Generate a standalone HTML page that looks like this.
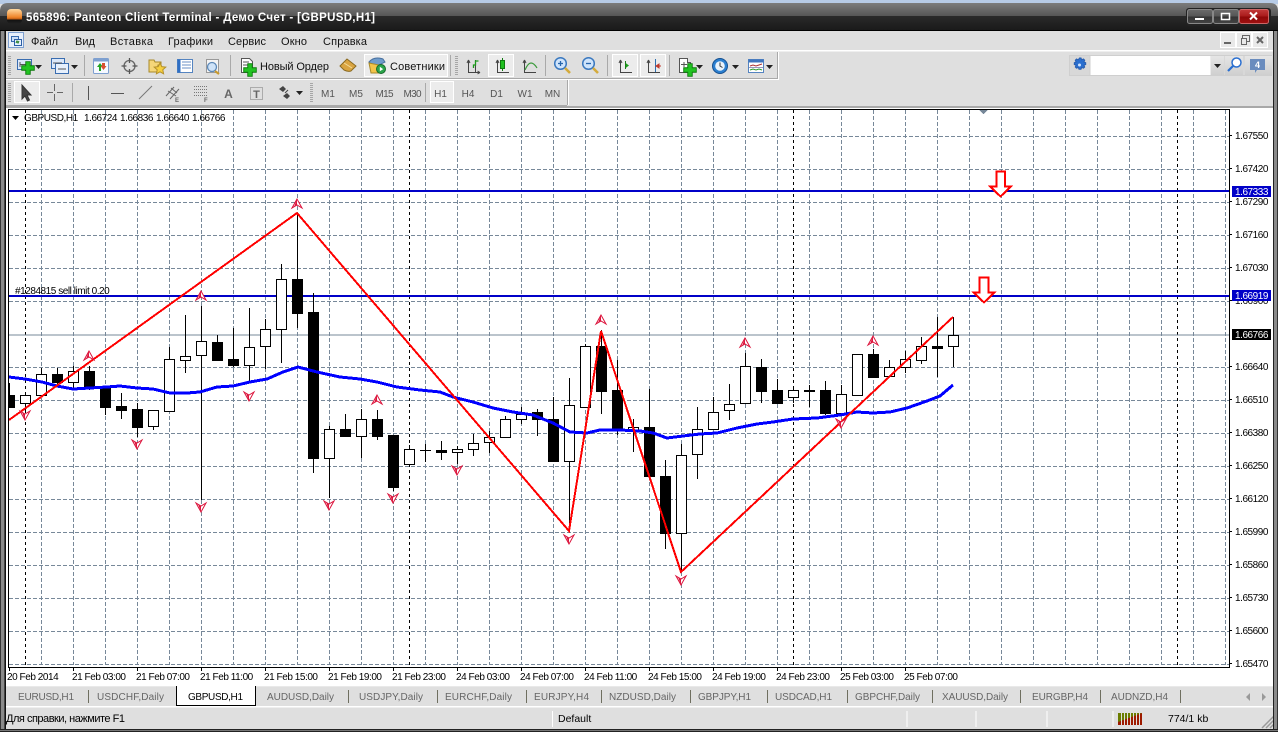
<!DOCTYPE html>
<html lang="ru"><head><meta charset="utf-8"><title>565896: Panteon Client Terminal</title>
<style>
html,body{margin:0;padding:0;width:1278px;height:732px;overflow:hidden;background:#dfdfdf}
svg{display:block;position:absolute;left:0;top:0}
text{font-family:"Liberation Sans","Noto Sans CJK SC",sans-serif}
.px text{font-size:10px;letter-spacing:-.45px;fill:#000}
.m text{font-size:11px;fill:#111}
.tf text{font-size:10px;fill:#555;text-anchor:middle}
.tb text{font-size:10px;fill:#666}
.c{shape-rendering:crispEdges}
</style></head><body>
<svg width="1278" height="732" viewBox="0 0 1278 732">
<defs>
<linearGradient id="tg" x1="0" y1="0" x2="0" y2="1"><stop offset="0" stop-color="#7c7c7c"/><stop offset="1" stop-color="#555"/></linearGradient>
<linearGradient id="tk" x1="0" y1="0" x2="0" y2="1"><stop offset="0" stop-color="#2a2a2a"/><stop offset="1" stop-color="#191919"/></linearGradient>
<linearGradient id="logo" x1="0" y1="0" x2="0" y2="1"><stop offset="0" stop-color="#ffd9a0"/><stop offset=".55" stop-color="#ee8428"/><stop offset=".68" stop-color="#b85a14"/><stop offset=".72" stop-color="#111"/><stop offset="1" stop-color="#222"/></linearGradient>
<linearGradient id="btn" x1="0" y1="0" x2="0" y2="1"><stop offset="0" stop-color="#6a6a6a"/><stop offset=".5" stop-color="#555"/><stop offset=".5" stop-color="#333"/><stop offset="1" stop-color="#444"/></linearGradient>
<linearGradient id="red" x1="0" y1="0" x2="0" y2="1"><stop offset="0" stop-color="#c23a3a"/><stop offset=".5" stop-color="#a81a1a"/><stop offset=".5" stop-color="#8e0808"/><stop offset="1" stop-color="#a01010"/></linearGradient>
<linearGradient id="sb" x1="0" y1="0" x2="0" y2="1"><stop offset="0" stop-color="#e6e6e6"/><stop offset="1" stop-color="#cfcfcf"/></linearGradient>
<g id="u"><path d="M0-5L-5 4 0 1 5 4z" fill="#fff" stroke="#dc143c"/><path d="M0-5L-3 3 0 1z" fill="#dc143c"/></g>
<g id="d"><path d="M0 5L-5-4 0-1 5-4z" fill="#fff" stroke="#dc143c"/><path d="M0 5L-3-3 0-1z" fill="#dc143c"/></g>
<path id="ar" d="M0 0h7l-3.500 4z" fill="#222"/>
<path id="plus" d="M-2.500-7h5v4.500h4.500v5h-4.500v4.500h-5v-4.500h-4.500v-5h4.500z" fill="#22c322" stroke="#0b7a0b"/>
<clipPath id="cc"><rect x="9" y="110" width="1220" height="557"/></clipPath>
</defs>

<!-- desktop + title bar -->
<rect width="1278" height="4" fill="#b7cbe6"/>
<path d="M0 16V11Q0 3 8 3H1270Q1278 3 1278 11V16z" fill="url(#tg)"/>
<rect y="16" width="1278" height="15" fill="url(#tk)"/>
<rect y="30" width="1278" height="1" fill="#000"/>
<rect x="7" y="9" width="15" height="15" rx="4" fill="url(#logo)"/>
<text x="26" y="21" font-size="11.5" font-weight="700" fill="#fff" textLength="349" lengthAdjust="spacing">565896: Panteon Client Terminal - Демо Счет - [GBPUSD,H1]</text>
<!-- window buttons -->
<rect x="1186" y="8" width="85" height="18" rx="3" fill="#222"/>
<rect x="1187.500" y="9.500" width="25" height="14" rx="2" fill="url(#btn)" stroke="#888"/>
<rect x="1213.500" y="9.500" width="25" height="14" rx="2" fill="url(#btn)" stroke="#888"/>
<rect x="1239.500" y="9.500" width="29" height="14" rx="2" fill="url(#red)" stroke="#c66"/>
<rect x="1195" y="18" width="9" height="2" fill="#fff"/>
<rect x="1221.500" y="13.500" width="8" height="6" fill="none" stroke="#fff" stroke-width="1.500"/>
<path d="M1250 12.500l7 7M1257 12.500l-7 7" stroke="#fff" stroke-width="2"/>

<!-- client -->
<rect y="31" width="1278" height="76" fill="#dfdfdf"/>
<rect y="50" width="1274" height="1.500" fill="#fff"/>
<rect y="106" width="1278" height="2" fill="#a8a8a8"/>
<!-- menu -->
<rect x="8.500" y="32.500" width="15" height="15" fill="#e8f0fb" stroke="#7ea0d0"/>
<rect x="11.500" y="36.500" width="7" height="5" fill="#cfe0f6" stroke="#3a6db0"/><rect x="14.500" y="39.500" width="7" height="6" fill="#e8f2ff" stroke="#2c5ea4"/><path d="M16 43l1-2 1 2 1-2" stroke="#1f7a1f" fill="none"/>
<g class="m">
<text x="31" y="45">Файл</text><text x="75" y="45">Вид</text><text x="110" y="45" textLength="43">Вставка</text><text x="168" y="45" textLength="45">Графики</text><text x="228" y="45" textLength="38">Сервис</text><text x="281" y="45" textLength="26">Окно</text><text x="323" y="45" textLength="44">Справка</text>
</g>
<g fill="#e9e9e9" stroke="#fff"><rect x="1220.500" y="32.500" width="15" height="15"/><rect x="1236.500" y="32.500" width="15" height="15"/><rect x="1252.500" y="32.500" width="15" height="15"/></g>
<rect x="1224" y="42" width="7" height="2" fill="#666"/>
<path d="M1242.500 38.500v-3h7v6h-3M1242.500 38.500h4v6h-5v-6z" fill="none" stroke="#666"/>
<path d="M1257 37l6 6M1263 37l-6 6" stroke="#666" stroke-width="2"/>

<!-- toolbar frames -->
<path d="M5 78.500H777.500V52" fill="none" stroke="#a9a9a9" class="c"/><path d="M5 79.500H778.500V52" fill="none" stroke="#fff" class="c"/>
<path d="M567.500 80V105" stroke="#a9a9a9" class="c"/><path d="M568.500 80V105" stroke="#fff" class="c"/>
<path d="M5 105.500H567" stroke="#a9a9a9" class="c"/>
<path d="M9.500 56v20M9.500 83v19M311.500 83v19M456.500 56v20" stroke="#a6a6a6" stroke-dasharray="1 1" stroke-width="3" class="c"/>
<path d="M84.500 55v21M230.500 55v21M545.500 55v21M607.500 55v21M669.500 55v21M450.500 55v21M72.500 83v19M425.500 83v19" stroke="#a9a9a9" class="c"/>

<!-- toolbar 1 icons -->
<rect x="17.500" y="59.500" width="14" height="10" fill="#dbe8fa" stroke="#3a6db0"/><path d="M20 64.500h8M20 62v5" stroke="#555" fill="none"/>
<use href="#plus" x="28" y="68" transform="translate(2.800 6.800) scale(.9)"/>
<use href="#ar" x="35" y="65"/>
<rect x="51.500" y="58.500" width="13" height="10" fill="#dbe8fa" stroke="#3a6db0"/><rect x="55.500" y="63.500" width="13" height="10" fill="#e7f0fc" stroke="#3a6db0"/><path d="M53 63h9M58 69h8" stroke="#555"/>
<use href="#ar" x="71" y="65"/>
<rect x="93.500" y="58.500" width="15" height="15" rx="1" fill="#f6f9ff" stroke="#7ea0d0"/><rect x="93.500" y="58.500" width="15" height="3" fill="#7ea0d0"/><path d="M99 71v-4h-2l3-4 3 4h-2v4z" fill="#22a322"/><path d="M102 63h3v3h1.500l-3 4-3-4h1.500z" fill="#d9502f"/>
<circle cx="129.500" cy="66" r="5.500" fill="none" stroke="#666" stroke-width="1.300"/><path d="M129.500 58v5M129.500 69v5M121.500 66h5M132.500 66h5" stroke="#555" stroke-width="1.300"/>
<path d="M149 60h5l1 2h6v3l-3 0-1 7h-8z" fill="#f5d679" stroke="#a88a2a"/><path d="M160 63l1.800 3.600 4 .5-3 2.700.8 4-3.600-2-3.600 2 .8-4-3-2.700 4-.5z" fill="#f6cf3f" stroke="#b3902a"/>
<rect x="177.500" y="59.500" width="15" height="13" fill="#fff" stroke="#5584c0"/><rect x="177.500" y="59.500" width="3" height="13" fill="#2f6fc4"/><path d="M182 62h9M182 65h9M182 68h9" stroke="#6a8fc4"/>
<rect x="206.500" y="59.500" width="12" height="13" fill="#f4f4f4" stroke="#999"/><circle cx="212" cy="67" r="4.500" fill="#cfe3f8" stroke="#5d89b8" stroke-width="1.300"/><path d="M215 71l4 3" stroke="#c99a2e" stroke-width="2.200"/>
<path d="M241.500 58.500h8l3 3v11h-11z" fill="#fff" stroke="#555"/><path d="M243 62h6M243 65h7" stroke="#555"/>
<use href="#plus" x="0" y="0" transform="translate(250 70) scale(.9)"/>
<text x="260" y="70" font-size="11" fill="#111" textLength="69">Новый Ордер</text>
<path d="M340 66l7-7 9 7-5 5q-3 1-7-1z" fill="#d9a441" stroke="#8a6a20"/><path d="M344 63l8 5" stroke="#f3dc9a"/>
<rect x="364.500" y="54.500" width="83" height="22" fill="#ececec" stroke="#fff"/>
<path d="M369 62q5-6 14-3l2 3-6 3-7 0z" fill="#6f9ccc" stroke="#48709e"/><path d="M369 63l10 2v8h-8z" fill="#f2c44a" stroke="#a88a2a"/>
<circle cx="381" cy="69" r="4.500" fill="#2aa44a" stroke="#176a2b"/><path d="M379.800 66.800v4.500l3.400-2.200z" fill="#fff"/>
<text x="390" y="70" font-size="11" fill="#111" textLength="55">Советники</text>

<!-- chart mode icons -->
<g fill="none" stroke="#444"><path d="M468.500 60v12.500H480M468.500 60l-1.500 3M468.500 60l1.500 3M480 72.500l-2.500-1.500M480 72.500l-2.500 1.500M475.500 60v12"/></g>
<path d="M473.500 68v-3h2v-4h3" fill="none" stroke="#1a9a1a" stroke-width="1.300"/>
<rect x="488.500" y="54.500" width="25" height="22" fill="#ececec" stroke="#fff"/>
<path d="M497.500 60v12.500H509M497.500 60l-1.500 3M497.500 60l1.500 3" fill="none" stroke="#444"/><rect x="500.500" y="60.500" width="4" height="8" fill="#1fc01f" stroke="#0e7a0e"/><path d="M502.500 58v2M502.500 69v2" stroke="#0e7a0e"/>
<path d="M524.500 60v12.500H536M524.500 60l-1.500 3M524.500 60l1.500 3" fill="none" stroke="#444"/><path d="M525 70q3-7 6-7t6 5" fill="none" stroke="#3a9a3a" stroke-width="1.200"/>
<!-- zoom -->
<circle cx="560.500" cy="63.500" r="5.800" fill="#cfe4fb" stroke="#3a78bf" stroke-width="1.500"/><path d="M558 63.500h5M560.500 61v5" stroke="#2766ad" stroke-width="1.300"/><path d="M565 68l5 5" stroke="#d4ab3c" stroke-width="2.600"/>
<circle cx="588.500" cy="63.500" r="5.800" fill="#cfe4fb" stroke="#3a78bf" stroke-width="1.500"/><path d="M586 63.500h5" stroke="#2766ad" stroke-width="1.300"/><path d="M593 68l5 5" stroke="#d4ab3c" stroke-width="2.600"/>
<!-- shift / autoscroll -->
<rect x="612.500" y="54.500" width="25" height="22" fill="#ececec" stroke="#fff"/><rect x="640.500" y="54.500" width="25" height="22" fill="#ececec" stroke="#fff"/>
<path d="M620.500 60v12.500H632M620.500 60l-1.500 3M620.500 60l1.500 3" fill="none" stroke="#444"/><path d="M625 62.500l4 3-4 3z" fill="#1aa01a"/><path d="M625.500 61v8" stroke="#1a7a1a"/>
<path d="M648.500 60v12.500H660M648.500 60l-1.500 3M648.500 60l1.500 3" fill="none" stroke="#444"/><path d="M655.500 59v13" stroke="#2c6fb0"/><path d="M661 66h-4M659 64l-3 2 3 2z" stroke="#c0392b" fill="#c0392b"/>
<!-- chart add, clock, template -->
<path d="M679.500 58.500h8v4h3v10h-11z" fill="#fff" stroke="#555"/><path d="M681 64.500h6M684 62v5" stroke="#555"/><use href="#plus" transform="translate(690 70) scale(.9)"/>
<use href="#ar" x="696" y="65"/>
<circle cx="720" cy="66" r="7.500" fill="#2b7fd0" stroke="#17508f"/><circle cx="720" cy="66" r="4.800" fill="#eaf3fb"/><path d="M720 62.500V66l2.500 1.500" stroke="#333" fill="none"/>
<use href="#ar" x="732" y="65"/>
<rect x="748.500" y="59.500" width="15" height="13" fill="#fff" stroke="#5584c0"/><rect x="748.500" y="59.500" width="15" height="3" fill="#3d75be"/><path d="M750 66l3-1 3 1 3-1 3-1" stroke="#a33" fill="none"/><path d="M750 70l3-1 3 1 3-1 3 1" stroke="#2a9a2a" fill="none"/><path d="M749 67.500h14" stroke="#99b"/>
<use href="#ar" x="766" y="65"/>
<!-- search -->
<rect x="1069.500" y="55.500" width="202" height="20" fill="#d8d8d8" stroke="#cfcfcf"/>
<path d="M1079 58l1.500 0 .7 1.800 1.800-.8 1.200 1.200-.8 1.800 1.800.7v1.800l-1.800.7.800 1.800-1.200 1.200-1.800-.8-.7 1.800h-2l-.7-1.800-1.800.8-1.200-1.200.8-1.800-1.800-.7v-1.800l1.800-.7-.8-1.800 1.200-1.200 1.800.8z" fill="#2a6fd0" stroke="#2a5fb0" transform="translate(.5 0)"/>
<circle cx="1079.500" cy="65" r="1.500" fill="#cfe3ff"/>
<rect x="1090" y="56" width="120.500" height="19" fill="#fff"/><path d="M1090 55.500v20" stroke="#cfcfcf"/>
<rect x="1211" y="56" width="13" height="19" fill="url(#sb)"/><use href="#ar" x="1214" y="64"/>
<rect x="1225" y="56" width="18" height="19" fill="url(#sb)"/><circle cx="1236.500" cy="62.500" r="4.500" fill="#fff" stroke="#2a6fd0" stroke-width="1.500"/><path d="M1233 66l-5 5" stroke="#2a6fd0" stroke-width="2.200"/>
<rect x="1245" y="56" width="27" height="19" fill="url(#sb)"/><path d="M1250 59h15v11h-8l-2 3v-3h-5z" fill="#6a8cbe"/><text x="1257.500" y="68" font-size="9" font-weight="700" fill="#fff" text-anchor="middle">4</text>

<!-- toolbar 2 -->
<rect x="14.500" y="81.500" width="25" height="21" fill="#ececec" stroke="#fff"/>
<path d="M22 85v14l3-3 2.500 5 2-1-2.500-5h4z" fill="#444" stroke="#333"/>
<path d="M54.500 84v7M54.500 94v7M47 92.500h6M57 92.500h6" stroke="#666"/>
<path d="M88.500 86v14" stroke="#555"/><path d="M111 93.500h13" stroke="#555"/><path d="M139 99l13-13" stroke="#777"/>
<path d="M166 96l8-9M170 99l9-10M168 91l8 5M171 88l6 5" stroke="#666" fill="none"/><text x="175" y="102" font-size="6" font-weight="700" fill="#666">E</text>
<path d="M194 86.500h13M194 89.500h13M194 92.500h13M194 95.500h13" stroke="#777" stroke-dasharray="1 1"/><text x="204" y="102" font-size="6" font-weight="700" fill="#666">F</text>
<text x="228.500" y="98" font-size="12" font-weight="700" fill="#666" text-anchor="middle">A</text>
<rect x="250.500" y="87.500" width="12" height="12" fill="none" stroke="#777" stroke-dasharray="1 1"/><text x="256.500" y="98" font-size="11" font-weight="700" fill="#666" text-anchor="middle">T</text>
<path d="M279 89l4-3 3 3-3 3zM283 96l4-3 3 3-3 3z" fill="#444"/><path d="M285 93l3-3" stroke="#444"/>
<use href="#ar" x="296" y="91"/>
<rect x="430.500" y="81.500" width="23" height="21" fill="#ececec" stroke="#fff"/>
<g class="tf"><text x="328" y="97">M1</text><text x="356" y="97">M5</text><text x="384.500" y="97" textLength="18">M15</text><text x="412.500" y="97" textLength="18">M30</text><text x="440.500" y="97">H1</text><text x="468" y="97">H4</text><text x="496.500" y="97">D1</text><text x="525" y="97">W1</text><text x="552.500" y="97">MN</text></g>

<!-- chart panel -->
<rect x="6" y="108" width="1267" height="579" fill="#fff"/>
<rect x="6" y="686" width="1267" height="1" fill="#e9e9e9"/>
<rect x="8.500" y="109.500" width="1221" height="558" fill="#fff" stroke="#000" class="c"/>

<g clip-path="url(#cc)" class="c">
<!-- grid -->
<path fill="none" stroke="#778899" stroke-dasharray="4 2" d="M41.500 110V665M73.500 110V665M105.500 110V665M137.500 110V665M169.500 110V665M201.500 110V665M233.500 110V665M265.500 110V665M297.500 110V665M329.500 110V665M361.500 110V665M393.500 110V665M425.500 110V665M457.500 110V665M489.500 110V665M521.500 110V665M553.500 110V665M585.500 110V665M617.500 110V665M649.500 110V665M681.500 110V665M713.500 110V665M745.500 110V665M777.500 110V665M809.500 110V665M841.500 110V665M873.500 110V665M905.500 110V665M937.500 110V665M969.500 110V665M1001.500 110V665M1033.500 110V665M1065.500 110V665M1097.500 110V665M1129.500 110V665M1161.500 110V665M1193.500 110V665M1225.500 110V665"/>
<path fill="none" stroke="#778899" stroke-dasharray="4 2" d="M9 136.500H1229M9 169.500H1229M9 202.500H1229M9 235.500H1229M9 268.500H1229M9 301.500H1229M9 367.500H1229M9 400.500H1229M9 433.500H1229M9 466.500H1229M9 499.500H1229M9 532.500H1229M9 565.500H1229M9 598.500H1229M9 631.500H1229M9 664.500H1229"/>
<path fill="none" stroke="#000" stroke-dasharray="3 3" d="M25.500 110V667M409.500 110V667M793.500 110V667M1177.500 110V667"/>
<path stroke="#778899" d="M9 335H1229"/>
<path d="M979 110h9l-4.500 4z" fill="#778899"/>
<!-- trade lines -->
<path d="M9 191H1229M9 296H1229" stroke="#0000c8" stroke-width="2"/>
<!-- wicks -->
<path stroke="#000" fill="none" d="M9.500 383V395M25.500 395V412M41.500 368V395M57.500 368V386M73.500 366V390M89.500 366V390M105.500 387V415M121.500 393V419M137.500 403V437M153.500 410V430M169.500 347V411M185.500 315V373M201.500 306V500M217.500 335V361M233.500 328V367M249.500 308V383M265.500 319V369M281.500 264V363M297.500 213V328M313.500 293V473M329.500 426V498M345.500 414V437M361.500 409V458M377.500 410V440M393.500 435V491M409.500 445V466M425.500 444V462M441.500 441V460M457.500 446V464M473.500 434V456M489.500 431V453M505.500 416V438M521.500 407V424M537.500 409V436M553.500 397V462M569.500 378V530M585.500 344V407M601.500 330V414M617.500 360V435M633.500 419V452M649.500 389V476M665.500 460V549M681.500 444V572M697.500 407V479M713.500 397V429M729.500 384V420M745.500 353V403M761.500 359V403M777.500 379V403M793.500 387V403M809.500 385V407M825.500 381V415M841.500 385V413M857.500 354V396M873.500 349V378M889.500 360V376M905.500 351V373M921.500 337V364M937.500 317V377M953.500 317V367"/>
<path stroke="#000" d="M420 450.500h11"/>
<!-- bullish -->
<path fill="#fff" stroke="#000" d="M20.500 395.500h10v8h-10zM36.500 374.500h10v21h-10zM68.500 371.500h10v11h-10zM148.500 410.500h10v16h-10zM164.500 359.500h10v52h-10zM180.500 356.500h10v4h-10zM196.500 341.500h10v14h-10zM244.500 347.500h10v18h-10zM260.500 329.500h10v17h-10zM276.500 279.500h10v50h-10zM324.500 429.500h10v29h-10zM356.500 419.500h10v17h-10zM404.500 449.500h10v15h-10zM452.500 449.500h10v3h-10zM468.500 443.500h10v6h-10zM484.500 437.500h10v5h-10zM500.500 419.500h10v18h-10zM516.500 414.500h10v5h-10zM564.500 405.500h10v56h-10zM580.500 346.500h10v61h-10zM628.500 427.500h10v3h-10zM676.500 455.500h10v78h-10zM692.500 429.500h10v25h-10zM708.500 412.500h10v17h-10zM724.500 404.500h10v6h-10zM740.500 366.500h10v37h-10zM788.500 390.500h10v7h-10zM836.500 394.500h10v19h-10zM852.500 354.500h10v41h-10zM884.500 367.500h10v9h-10zM900.500 359.500h10v8h-10zM916.500 346.500h10v14h-10zM948.500 335.500h10v11h-10z"/>
<!-- bearish -->
<path fill="#000" stroke="#000" d="M9.500 395.500h5v12h-5zM52.500 374.500h10v8h-10zM84.500 371.500h10v16h-10zM100.500 388.500h10v19h-10zM116.500 406.500h10v4h-10zM132.500 409.500h10v18h-10zM212.500 342.500h10v18h-10zM228.500 359.500h10v6h-10zM292.500 279.500h10v34h-10zM308.500 312.500h10v146h-10zM340.500 429.500h10v7h-10zM372.500 419.500h10v17h-10zM388.500 435.500h10v52h-10zM436.500 450.500h10v2h-10zM532.500 412.500h10v7h-10zM548.500 419.500h10v42h-10zM596.500 346.500h10v45h-10zM612.500 390.500h10v39h-10zM644.500 427.500h10v49h-10zM660.500 476.500h10v57h-10zM756.500 367.500h10v24h-10zM772.500 390.500h10v13h-10zM804.500 390.500h10v1h-10zM820.500 390.500h10v23h-10zM868.500 354.500h10v23h-10zM932.500 346.500h10v2h-10z"/>
<!-- moving average -->
<path fill="none" stroke="#0000ff" stroke-width="3" d="M9 377L25 379 42 382 57 386 73 389 90 388 107 387 120 386 137 388 153 389 170 393 187 393 200 392 217 387 233 386 250 382 267 379 283 372 298 367 317 372 340 377 360 379 377 382 397 387 420 390 440 392 453 397 473 402 493 408 513 412 533 415 553 423 570 432 587 433 600 430 620 430 640 431 653 433 667 438 683 436 700 434 717 433 737 428 757 424 773 422 793 419 817 418 840 415 857 412 873 413 890 412 907 408 927 401 940 396 953 385"/>
<!-- zigzag -->
<path fill="none" stroke="#ff0000" stroke-width="2" d="M9 420L297 213 569 531 601 331 681 572 953 317"/>
<!-- order arrows -->
<path d="M996.500 171.500h8.500v15h6l-10.500 10-10.500-10h6.500z" fill="#fff" stroke="#ff0000" stroke-width="2"/>
<path d="M979.500 277.500h9v15h6l-10.500 10-10.500-10h6z" fill="#fff" stroke="#ff0000" stroke-width="2"/>
</g>
<!-- fractals -->
<g>
<use href="#u" x="297" y="204"/><use href="#u" x="201" y="296"/><use href="#u" x="89" y="356"/><use href="#u" x="377" y="400"/><use href="#u" x="601" y="320"/><use href="#u" x="745" y="343"/><use href="#u" x="873" y="341"/>
<use href="#d" x="25" y="415"/><use href="#d" x="137" y="444"/><use href="#d" x="201" y="507"/><use href="#d" x="249" y="396"/><use href="#d" x="329" y="505"/><use href="#d" x="393" y="498"/><use href="#d" x="457" y="470"/><use href="#d" x="569" y="539"/><use href="#d" x="681" y="580"/><use href="#d" x="841" y="423"/>
</g>
<!-- legend -->
<path d="M12 116h7l-3.500 4z" fill="#000"/>
<g class="px">
<text x="24" y="121">GBPUSD,H1</text><text x="84" y="121">1.66724</text><text x="120" y="121">1.66836</text><text x="156" y="121">1.66640</text><text x="192" y="121">1.66766</text>
<text x="15" y="294">#1284815 sell limit 0.20</text>
<!-- price axis -->
<path d="M1229 135.500h3M1229 168.500h3M1229 201.500h3M1229 234.500h3M1229 267.500h3M1229 300.500h3M1229 366.500h3M1229 399.500h3M1229 432.500h3M1229 465.500h3M1229 498.500h3M1229 531.500h3M1229 564.500h3M1229 597.500h3M1229 630.500h3M1229 663.500h3" stroke="#000" class="c"/>
<text x="1235" y="139">1.67550</text><text x="1235" y="172">1.67420</text><text x="1235" y="205">1.67290</text><text x="1235" y="238">1.67160</text><text x="1235" y="271">1.67030</text><text x="1235" y="304">1.66900</text><text x="1235" y="370">1.66640</text><text x="1235" y="403">1.66510</text><text x="1235" y="436">1.66380</text><text x="1235" y="469">1.66250</text><text x="1235" y="502">1.66120</text><text x="1235" y="535">1.65990</text><text x="1235" y="568">1.65860</text><text x="1235" y="601">1.65730</text><text x="1235" y="634">1.65600</text><text x="1235" y="667">1.65470</text>
<rect x="1232" y="186" width="39" height="11" fill="#0000c8"/><text x="1235" y="195" style="fill:#fff">1.67333</text>
<rect x="1232" y="290" width="39" height="11" fill="#0000c8"/><text x="1235" y="299" style="fill:#fff">1.66919</text>
<rect x="1232" y="329" width="39" height="11" fill="#000"/><text x="1235" y="338" style="fill:#fff">1.66766</text>
<!-- time axis -->
<path d="M9.500 667v4M73.500 667v4M137.500 667v4M201.500 667v4M265.500 667v4M329.500 667v4M393.500 667v4M457.500 667v4M521.500 667v4M585.500 667v4M649.500 667v4M713.500 667v4M777.500 667v4M841.500 667v4M905.500 667v4" stroke="#000" class="c"/>
<text x="7" y="680">20 Feb 2014</text><text x="72" y="680">21 Feb 03:00</text><text x="136" y="680">21 Feb 07:00</text><text x="200" y="680">21 Feb 11:00</text><text x="264" y="680">21 Feb 15:00</text><text x="328" y="680">21 Feb 19:00</text><text x="392" y="680">21 Feb 23:00</text><text x="456" y="680">24 Feb 03:00</text><text x="520" y="680">24 Feb 07:00</text><text x="584" y="680">24 Feb 11:00</text><text x="648" y="680">24 Feb 15:00</text><text x="712" y="680">24 Feb 19:00</text><text x="776" y="680">24 Feb 23:00</text><text x="840" y="680">25 Feb 03:00</text><text x="904" y="680">25 Feb 07:00</text>
</g>

<!-- tabs -->
<rect x="0" y="687" width="1278" height="20" fill="#dfdfdf"/>
<rect x="176.500" y="686.500" width="79" height="19" fill="#fff" stroke="#000" class="c"/><rect x="177" y="685" width="78" height="2" fill="#fff"/>
<path d="M88.500 690v13M348.500 690v13M437.500 690v13M526.500 690v13M601.500 690v13M690.500 690v13M767.500 690v13M847.500 690v13M932.500 690v13M1020.500 690v13M1100.500 690v13M1180.500 690v13M5.500 688v16" stroke="#6f6f60" class="c"/>
<g class="tb">
<text x="18" y="700" textLength="56">EURUSD,H1</text><text x="97" y="700" textLength="67">USDCHF,Daily</text><text x="188" y="700" textLength="55" style="fill:#000">GBPUSD,H1</text><text x="267" y="700" textLength="67">AUDUSD,Daily</text><text x="359" y="700" textLength="64">USDJPY,Daily</text><text x="445" y="700" textLength="67">EURCHF,Daily</text><text x="534" y="700" textLength="55">EURJPY,H4</text><text x="609" y="700" textLength="67">NZDUSD,Daily</text><text x="698" y="700" textLength="53">GBPJPY,H1</text><text x="775" y="700" textLength="57">USDCAD,H1</text><text x="855" y="700" textLength="65">GBPCHF,Daily</text><text x="942" y="700" textLength="66">XAUUSD,Daily</text><text x="1032" y="700" textLength="56">EURGBP,H4</text><text x="1111" y="700" textLength="57">AUDNZD,H4</text>
</g>
<path d="M1250 693v8l-4-4zM1262 693v8l4-4z" fill="#999"/>
<rect x="0" y="706" width="1278" height="1.500" fill="#fff"/>

<!-- status bar -->
<rect x="0" y="708" width="1278" height="21" fill="#dfdfdf"/>
<path d="M552.500 711v16M907 711v16M976 711v16M1047 711v16M1113 711v16" stroke="#fff" class="c"/>
<text x="6" y="722" font-size="11" fill="#000" textLength="119">Для справки, нажмите F1</text>
<text x="558" y="722" font-size="10.500" fill="#000">Default</text>
<text x="1168" y="722" font-size="10.500" fill="#000">774/1 kb</text>
<g class="c">
<rect x="1118" y="713" width="24" height="12" fill="#6b7d00"/>
<path d="M1118 725h24v-12l-24 9z" fill="#9e1a00"/>
<path d="M1121.500 713v12M1124.500 713v12M1127.500 713v12M1130.500 713v12M1133.500 713v12M1136.500 713v12M1139.500 713v12" stroke="#dfdfdf"/>
</g>
<g stroke="#999" stroke-width="1.500"><path d="M1262 728l12-12M1266 728l8-8M1270 728l4-4"/></g>

<!-- window frame -->
<g class="c">
<rect x="0" y="31" width="1" height="701" fill="#333"/><rect x="1" y="31" width="3" height="701" fill="#8a8a8a"/><rect x="4" y="31" width="1" height="701" fill="#444"/><rect x="5" y="31" width="1" height="701" fill="#111"/>
<rect x="1277" y="31" width="1" height="701" fill="#333"/><rect x="1274" y="31" width="3" height="701" fill="#8a8a8a"/><rect x="1273" y="31" width="1" height="701" fill="#222"/>
<rect x="0" y="729" width="1278" height="1" fill="#222"/><rect x="0" y="730" width="1278" height="1" fill="#777"/><rect x="0" y="731" width="1278" height="1" fill="#222"/>
</g>
</svg>
</body></html>
